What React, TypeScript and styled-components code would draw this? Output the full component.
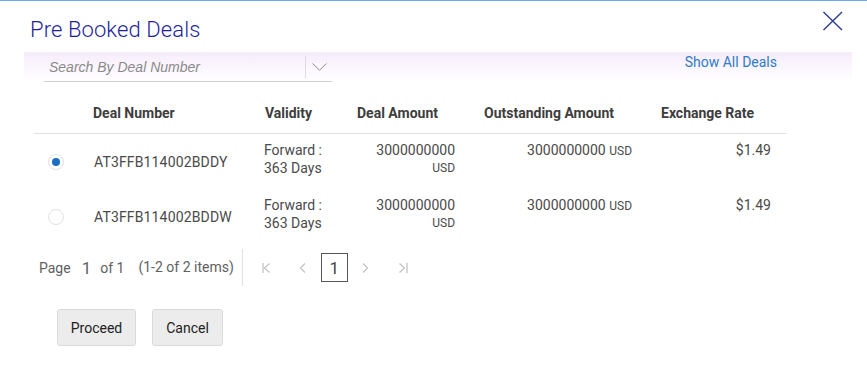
import React, { useState } from "react";
import styled, { createGlobalStyle } from "styled-components";

const GlobalStyle = createGlobalStyle`
  body {
    margin: 0;
    background: #ffffff;
    font-family: Roboto, "Noto Sans", Arial, sans-serif;
  }
`;

const Dialog = styled.div`
  width: 867px;
  height: 375px;
  box-sizing: border-box;
  border-top: 1px solid #6ea7f4;
  background: #ffffff;
`;

const Header = styled.div`
  display: flex;
  justify-content: space-between;
  align-items: flex-start;
  height: 51px;
  padding: 0 24px 0 30px;
`;

const Title = styled.h1`
  margin: 16px 0 0;
  font-size: 22px;
  line-height: 26px;
  font-weight: 300;
  color: #1f1f9c;
  letter-spacing: 0.1px;
`;

const CloseButton = styled.button`
  margin-top: 10px;
  padding: 0;
  width: 21px;
  height: 20px;
  border: 0;
  background: transparent;
  cursor: pointer;
`;

const SearchBand = styled.div`
  display: flex;
  justify-content: space-between;
  align-items: flex-start;
  height: 30px;
  margin: 0 15px 0 24px;
  padding: 0 75px 0 20px;
  background: linear-gradient(#f6ecfb, #fdfaff 70%, #ffffff);
`;

const SearchBox = styled.div`
  display: flex;
  align-items: center;
  width: 288px;
  height: 29px;
  border-bottom: 1px solid #cfcfcf;
`;

const SearchInput = styled.input`
  flex: 1;
  min-width: 0;
  height: 29px;
  padding: 0 0 0 5px;
  border: 0;
  outline: none;
  background: transparent;
  font-family: "Liberation Sans", Arial, sans-serif;
  font-size: 14px;
  color: #555;

  &::placeholder {
    color: #8a8a8a;
    font-style: italic;
  }
`;

const Toggle = styled.div`
  display: flex;
  align-items: center;
  justify-content: center;
  width: 26px;
  height: 22px;
  border-left: 1px solid #dcdcdc;
`;

const LinkText = styled.a`
  margin-top: 2px;
  font-size: 14px;
  line-height: 16px;
  color: #2f7bc6;
  text-decoration: none;
  cursor: pointer;
`;

const Table = styled.div`
  width: 753px;
  margin-left: 34px;
`;

const Row = styled.div<{ $head?: boolean }>`
  display: grid;
  grid-template-columns: 46px 172px 92px 127px 177px 139px;
  height: ${(p) => (p.$head ? "51px" : "55px")};
  border-bottom: ${(p) => (p.$head ? "1px solid #e2e2e2" : "0")};
`;

const HeadCell = styled.div`
  padding: 23px 0 0 13px;
  font-size: 14px;
  line-height: 16px;
  font-weight: 700;
  color: #3d3d3d;
  white-space: nowrap;
`;

const Cell = styled.div<{ $align?: "left" | "right"; $middle?: boolean }>`
  display: flex;
  flex-direction: column;
  justify-content: ${(p) => (p.$middle ? "center" : "flex-start")};
  align-items: ${(p) => (p.$align === "right" ? "flex-end" : "flex-start")};
  padding: ${(p) => (p.$middle ? "0 0 0 14px" : "7px 16px 0 12px")};
  font-size: 14px;
  line-height: 18px;
  color: #4a4a4a;
  white-space: nowrap;
  letter-spacing: ${(p) => (p.$middle ? "0.15px" : "0")};
`;

const Unit = styled.span`
  font-size: 12px;
`;

const RadioCell = styled.div`
  display: flex;
  align-items: center;
  padding-left: 14px;
`;

const Radio = styled.span<{ $checked: boolean }>`
  display: flex;
  align-items: center;
  justify-content: center;
  width: 14px;
  height: 14px;
  border: 1px solid #e1e1e1;
  border-radius: 50%;
  background: #ffffff;
  cursor: pointer;

  &::after {
    content: "";
    width: 8px;
    height: 8px;
    border-radius: 50%;
    background: ${(p) => (p.$checked ? "#1a6fc4" : "transparent")};
  }
`;

const Pager = styled.div`
  display: flex;
  align-items: center;
  height: 37px;
  margin: 5px 0 0 39px;
  font-size: 14px;
  color: #616161;
`;

const PageNo = styled.span`
  margin: 0 9px 0 11px;
  font-size: 17px;
`;

const Info = styled.span`
  margin-left: 14px;
  padding-right: 8px;
  border-right: 1px solid #e0e0e0;
  line-height: 37px;
`;

const PagerIcon = styled.span<{ $gap: number }>`
  display: flex;
  margin-left: ${(p) => p.$gap}px;
`;

const PageBox = styled.span`
  display: flex;
  align-items: center;
  justify-content: center;
  box-sizing: border-box;
  width: 27px;
  height: 29px;
  margin-left: 15px;
  border: 1px solid #555;
  font-size: 17px;
  color: #444;
`;

const Actions = styled.div`
  display: flex;
  gap: 16px;
  margin: 23px 0 0 57px;
`;

const Button = styled.button<{ $width: number }>`
  width: ${(p) => p.$width}px;
  height: 37px;
  border: 1px solid #dadada;
  border-radius: 3px;
  background: #ececec;
  font-family: Roboto, Arial, sans-serif;
  font-size: 14px;
  color: #222;
  cursor: pointer;
`;

const deals = [
  { id: "AT3FFB114002BDDY", amount: "3000000000", outstanding: "3000000000", rate: "$1.49" },
  { id: "AT3FFB114002BDDW", amount: "3000000000", outstanding: "3000000000", rate: "$1.49" },
];

const grey = "#c4c4c4";

export default function App() {
  const [selected, setSelected] = useState(0);

  return (
    <>
      <GlobalStyle />
      <Dialog>
        <Header>
          <Title>Pre Booked Deals</Title>
          <CloseButton aria-label="Close">
            <svg width="21" height="20" viewBox="0 0 21 20">
              <path d="M1.5 1 L20 19 M20 1 L1.5 19" stroke="#2c3c92" strokeWidth="1.4" fill="none" />
            </svg>
          </CloseButton>
        </Header>

        <SearchBand>
          <SearchBox>
            <SearchInput placeholder="Search By Deal Number" />
            <Toggle>
              <svg width="15" height="8" viewBox="0 0 15 8">
                <path d="M0.5 0.5 L7.5 7.2 L14.5 0.5" stroke="#8f8f8f" strokeWidth="1" fill="none" />
              </svg>
            </Toggle>
          </SearchBox>
          <LinkText>Show All Deals</LinkText>
        </SearchBand>

        <Table>
          <Row $head>
            <div />
            <HeadCell>Deal Number</HeadCell>
            <HeadCell>Validity</HeadCell>
            <HeadCell>Deal Amount</HeadCell>
            <HeadCell>Outstanding Amount</HeadCell>
            <HeadCell>Exchange Rate</HeadCell>
          </Row>
          {deals.map((d, i) => (
            <Row key={d.id}>
              <RadioCell>
                <Radio $checked={selected === i} onClick={() => setSelected(i)} />
              </RadioCell>
              <Cell $middle>{d.id}</Cell>
              <Cell>
                <span>Forward :</span>
                <span>363 Days</span>
              </Cell>
              <Cell $align="right">
                <span>{d.amount}</span>
                <Unit>USD</Unit>
              </Cell>
              <Cell $align="right">
                <span>
                  {d.outstanding} <Unit>USD</Unit>
                </span>
              </Cell>
              <Cell $align="right">{d.rate}</Cell>
            </Row>
          ))}
        </Table>

        <Pager>
          <span>Page</span>
          <PageNo>1</PageNo>
          <span>of 1</span>
          <Info>(1-2 of 2 items)</Info>
          <PagerIcon $gap={19}>
            <svg width="8" height="10" viewBox="0 0 8 10">
              <path d="M1 0 V10 M7.5 0.5 L2.5 5 L7.5 9.5" stroke={grey} strokeWidth="1.3" fill="none" />
            </svg>
          </PagerIcon>
          <PagerIcon $gap={29}>
            <svg width="7" height="10" viewBox="0 0 7 10">
              <path d="M6 0.5 L1.5 5 L6 9.5" stroke={grey} strokeWidth="1.3" fill="none" />
            </svg>
          </PagerIcon>
          <PageBox>1</PageBox>
          <PagerIcon $gap={14}>
            <svg width="7" height="10" viewBox="0 0 7 10">
              <path d="M1 0.5 L5.5 5 L1 9.5" stroke={grey} strokeWidth="1.3" fill="none" />
            </svg>
          </PagerIcon>
          <PagerIcon $gap={30}>
            <svg width="9" height="10" viewBox="0 0 9 10">
              <path d="M0.5 0.5 L5.5 5 L0.5 9.5 M8 0 V10" stroke={grey} strokeWidth="1.3" fill="none" />
            </svg>
          </PagerIcon>
        </Pager>

        <Actions>
          <Button $width={79}>Proceed</Button>
          <Button $width={71}>Cancel</Button>
        </Actions>
      </Dialog>
    </>
  );
}
